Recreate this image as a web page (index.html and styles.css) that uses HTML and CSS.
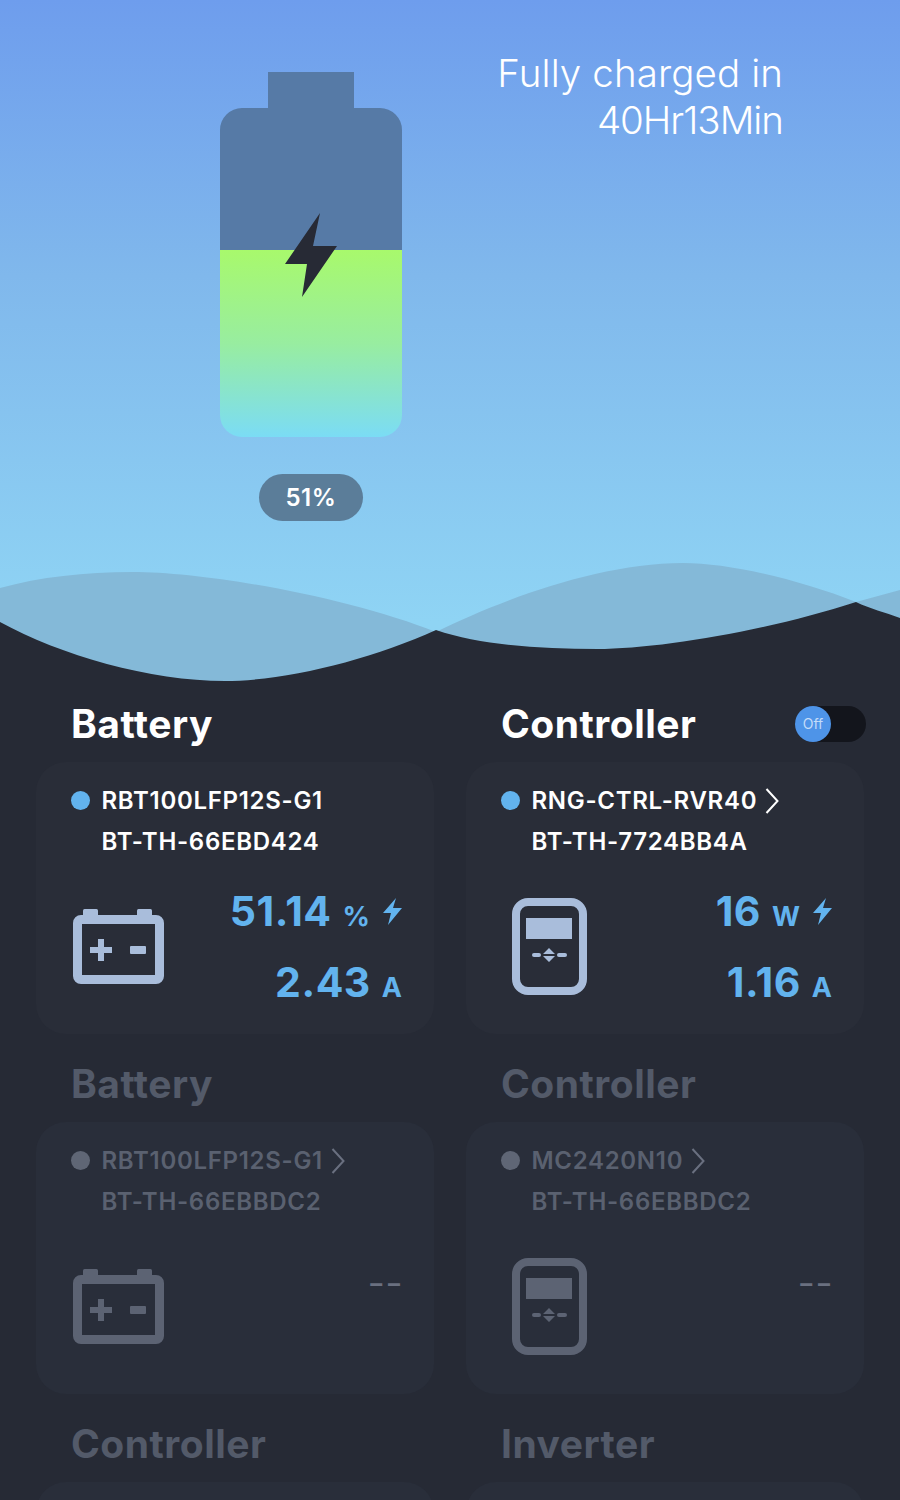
FILE: index.html
```html
<!DOCTYPE html>
<html lang="en">
<head>
<meta charset="utf-8">
<title>Battery status</title>
<link rel="stylesheet" href="styles.css">
</head>
<body>
<svg class="defs" width="0" height="0" aria-hidden="true">
  <defs>
    <symbol id="icon-battery" viewBox="0 0 91 76">
      <rect x="10" y="0" width="15" height="10" rx="1.5" fill="currentColor"/>
      <rect x="64" y="0" width="15" height="10" rx="1.5" fill="currentColor"/>
      <rect x="4.5" y="10.5" width="82" height="60" rx="3.5" fill="none" stroke="currentColor" stroke-width="9"/>
      <path d="M25 30h6v8h8v6h-8v8h-6v-8h-8v-6h8z" fill="currentColor"/>
      <rect x="57" y="37" width="16" height="8" rx="1" fill="currentColor"/>
    </symbol>
    <symbol id="icon-controller" viewBox="0 0 76 97">
      <rect x="4" y="4" width="67" height="89" rx="12" fill="none" stroke="currentColor" stroke-width="8"/>
      <rect x="14" y="20" width="46" height="21" fill="currentColor"/>
      <rect x="20" y="55" width="9" height="4" rx="2" fill="currentColor"/>
      <rect x="45" y="55" width="10" height="4" rx="2" fill="currentColor"/>
      <path d="M37 50l6 6h-12zM37 64l6-6h-12z" fill="currentColor"/>
    </symbol>
    <symbol id="icon-bolt" viewBox="0 0 19 27">
      <path d="M13 0 0 15h8L5 27 19 10h-9z" fill="currentColor"/>
    </symbol>
    <symbol id="icon-chevron" viewBox="0 0 14 26">
      <path d="M1.5 1 12.5 13 1.5 25" fill="none" stroke="currentColor" stroke-width="2"/>
    </symbol>
  </defs>
</svg>

<div class="app">
  <header class="hero">
    <svg class="waves" viewBox="0 0 900 690" aria-hidden="true">
      <path class="wave-back" d="M0 588C40 577 85 572 132 572C210 572 350 598 436 632C500 600 600 563 683 563C730 563 800 580 856 602L900 590V690H0Z"/>
      <path class="wave-front" d="M0 622C60 655 150 681 225 681C285 681 370 660 436 630C480 645 540 649 597 649C660 649 770 630 856 602C870 609 885 612 900 618V690H0Z"/>
    </svg>
    <div class="gauge">
      <svg class="gauge-battery" viewBox="0 0 182 365" aria-hidden="true">
        <defs>
          <linearGradient id="charge" x1="0" y1="0" x2="0" y2="1">
            <stop offset="0" stop-color="#a8f96c"/>
            <stop offset=".5" stop-color="#98eda0"/>
            <stop offset="1" stop-color="#7bdcf5"/>
          </linearGradient>
        </defs>
        <path fill="#567aa6" d="M48 0H134V36H160A22 22 0 0 1 182 58V178H0V58A22 22 0 0 1 22 36H48Z"/>
        <path fill="url(#charge)" d="M0 178H182V343A22 22 0 0 1 160 365H22A22 22 0 0 1 0 343Z"/>
        <path fill="#272a35" d="M100 141 65 192H87L82 225 117 174H93Z"/>
      </svg>
      <div class="gauge-pill">51%</div>
    </div>
    <p class="eta">Fully charged in<br><span class="eta-time">40Hr13Min</span></p>
  </header>

  <main class="devices">
    <section class="device">
      <h2 class="device-title">Battery</h2>
      <div class="card">
        <div class="name-row"><span class="dot"></span><span>RBT100LFP12S-G1</span></div>
        <div class="serial">BT-TH-66EBD424</div>
        <div class="body">
          <svg class="icon-battery"><use href="#icon-battery"/></svg>
          <div class="values">
            <div class="value"><b>51.14</b><span class="unit">%</span><svg class="bolt"><use href="#icon-bolt"/></svg></div>
            <div class="value"><b>2.43</b><span class="unit">A</span></div>
          </div>
        </div>
      </div>
    </section>

    <section class="device">
      <div class="title-row">
        <h2 class="device-title">Controller</h2>
        <div class="toggle"><span class="knob">Off</span></div>
      </div>
      <div class="card">
        <div class="name-row"><span class="dot"></span><span>RNG-CTRL-RVR40</span><svg class="chevron"><use href="#icon-chevron"/></svg></div>
        <div class="serial">BT-TH-7724BB4A</div>
        <div class="body">
          <svg class="icon-controller"><use href="#icon-controller"/></svg>
          <div class="values">
            <div class="value"><b>16</b><span class="unit">W</span><svg class="bolt"><use href="#icon-bolt"/></svg></div>
            <div class="value"><b>1.16</b><span class="unit">A</span></div>
          </div>
        </div>
      </div>
    </section>

    <section class="device device-off">
      <h2 class="device-title">Battery</h2>
      <div class="card">
        <div class="name-row"><span class="dot"></span><span>RBT100LFP12S-G1</span><svg class="chevron"><use href="#icon-chevron"/></svg></div>
        <div class="serial">BT-TH-66EBBDC2</div>
        <div class="body">
          <svg class="icon-battery"><use href="#icon-battery"/></svg>
          <div class="values"><div class="empty">– –</div></div>
        </div>
      </div>
    </section>

    <section class="device device-off">
      <h2 class="device-title">Controller</h2>
      <div class="card">
        <div class="name-row"><span class="dot"></span><span>MC2420N10</span><svg class="chevron"><use href="#icon-chevron"/></svg></div>
        <div class="serial">BT-TH-66EBBDC2</div>
        <div class="body">
          <svg class="icon-controller"><use href="#icon-controller"/></svg>
          <div class="values"><div class="empty">– –</div></div>
        </div>
      </div>
    </section>

    <section class="device device-off">
      <h2 class="device-title">Controller</h2>
      <div class="card"></div>
    </section>

    <section class="device device-off">
      <h2 class="device-title">Inverter</h2>
      <div class="card"></div>
    </section>
  </main>
</div>
</body>
</html>
```

FILE: styles.css
```css
* { box-sizing: border-box; }

html, body {
  margin: 0;
  height: 1500px;
  overflow: hidden;
  background: #262a35;
}

body {
  font-family: Inter, "Liberation Sans", sans-serif;
  color: #fff;
}

.defs { position: absolute; }

.app {
  width: 900px;
  height: 1500px;
  overflow: hidden;
}

/* Hero */
.hero {
  position: relative;
  height: 690px;
  padding: 72px 117px 0 220px;
  display: flex;
  justify-content: space-between;
  align-items: flex-start;
  background: linear-gradient(180deg, #6e9ded 0%, #80b8ec 40%, #8fd4f4 90%);
}

.waves {
  position: absolute;
  inset: 0;
  width: 900px;
  height: 690px;
}
.wave-back { fill: #84b9d8; }
.wave-front { fill: #262a35; }

.gauge {
  position: relative;
  width: 182px;
  display: flex;
  flex-direction: column;
  align-items: center;
  gap: 37px;
}
.gauge-battery { width: 182px; height: 365px; display: block; }
.gauge-pill {
  width: 104px;
  height: 47px;
  border-radius: 24px;
  background: #5b7d99;
  font-size: 24px;
  font-weight: 600;
  line-height: 47px;
  letter-spacing: 0.6px;
  text-align: center;
}

.eta {
  position: relative;
  margin: -22px 0 0;
  font-size: 38.5px;
  font-weight: 300;
  line-height: 46.5px;
  letter-spacing: 0.1px;
  text-align: right;
}
.eta-time { letter-spacing: -1px; }

/* Device grid */
.devices {
  display: grid;
  grid-template-columns: 398px 398px;
  column-gap: 32px;
  row-gap: 16px;
  padding: 0 36px;
}

.device-title {
  margin: 0;
  height: 68px;
  padding-left: 35px;
  font-size: 39px;
  font-weight: 700;
  line-height: 68px;
  letter-spacing: 0.5px;
}

.title-row {
  display: flex;
  justify-content: space-between;
  align-items: center;
  height: 68px;
  margin-right: -2px;
}

.toggle {
  width: 71px;
  height: 36px;
  border-radius: 18px;
  background: #13151c;
}
.knob {
  display: block;
  width: 36px;
  height: 36px;
  border-radius: 50%;
  background: #4e94e8;
  color: #c4dcf8;
  font-size: 14px;
  line-height: 36px;
  text-align: center;
}

.card {
  height: 272px;
  margin-top: 4px;
  padding: 18px 32px 0 34.5px;
  border-radius: 30px;
  background: #292d38;
}

.name-row,
.serial {
  height: 41px;
  font-size: 24px;
  font-weight: 600;
  line-height: 42px;
  letter-spacing: 0.7px;
}
.name-row {
  display: flex;
  align-items: center;
  gap: 12px;
}
.serial { padding-left: 31px; }

.dot {
  width: 19px;
  height: 19px;
  border-radius: 50%;
  background: #62b3ee;
  flex: none;
}
.chevron {
  width: 14px;
  height: 26px;
  margin-left: -4px;
}

.body {
  display: flex;
  justify-content: space-between;
  align-items: flex-start;
  margin-top: 24px;
  color: #a9bddb;
}
.icon-battery {
  width: 91px;
  height: 76px;
  margin: 23px 0 0 2px;
}
.icon-controller {
  width: 76px;
  height: 97px;
  margin: 12px 0 0 11px;
}

.values {
  display: flex;
  flex-direction: column;
  align-items: flex-end;
  gap: 21px;
  color: #62b3ee;
}
.value {
  display: flex;
  align-items: baseline;
  height: 50px;
  line-height: 50px;
  font-weight: 700;
}
.value b {
  font-size: 41px;
  font-weight: 700;
  letter-spacing: 0.5px;
}
.unit {
  margin-left: 11px;
  font-size: 27px;
}
.bolt {
  width: 19px;
  height: 27px;
  margin-left: 13px;
  align-self: center;
}

/* Offline devices */
.device-off .device-title { color: #535a69; }
.device-off .card { background: #292e3a; }
.device-off .name-row,
.device-off .serial { color: #5a6170; }
.device-off .dot { background: #5f6675; }
.device-off .chevron { color: #6a7080; }
.device-off .body { color: #5c6373; }
.empty {
  height: 50px;
  padding-top: 13px;
  margin-right: 2px;
  color: #6a7080;
  font-size: 24px;
  font-weight: 700;
  line-height: 50px;
}
```
